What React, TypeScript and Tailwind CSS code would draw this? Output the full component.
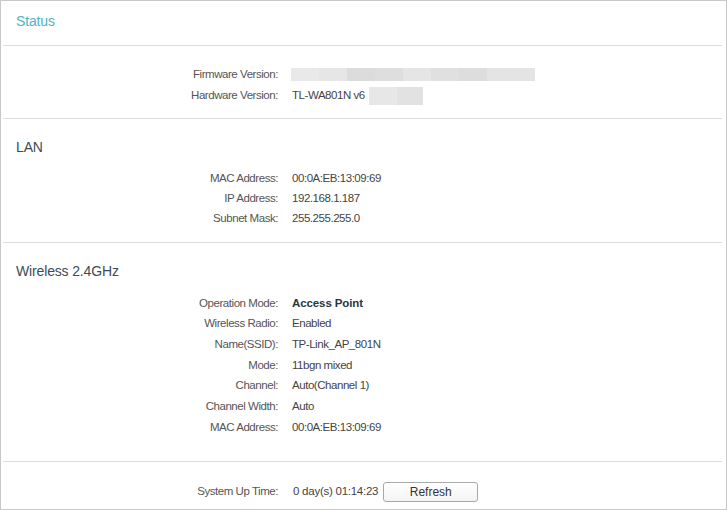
import React from 'react';

type Row = { label: string; value: React.ReactNode };

const font = { fontFamily: '"Liberation Sans", Arial, sans-serif' };

function Divider() {
  return <div className="ml-[2px] mr-[4px] h-px bg-[#dcdcdc]" />;
}

function InfoRow({ label, value, h }: { label: string; value: React.ReactNode; h: string }) {
  return (
    <div className={`flex items-center text-[11.5px] tracking-[-0.45px] ${h}`}>
      <div className="w-[277px] shrink-0 text-right text-[#555]">{label}</div>
      <div className="pl-[14px] text-[#444]">{value}</div>
    </div>
  );
}

const lanRows: Row[] = [
  { label: 'MAC Address:', value: '00:0A:EB:13:09:69' },
  { label: 'IP Address:', value: '192.168.1.187' },
  { label: 'Subnet Mask:', value: '255.255.255.0' },
];

const wirelessRows: Row[] = [
  {
    label: 'Operation Mode:',
    value: <span className="font-bold tracking-[-0.1px] text-[#26363f]">Access Point</span>,
  },
  { label: 'Wireless Radio:', value: 'Enabled' },
  { label: 'Name(SSID):', value: 'TP-Link_AP_801N' },
  { label: 'Mode:', value: '11bgn mixed' },
  { label: 'Channel:', value: 'Auto(Channel 1)' },
  { label: 'Channel Width:', value: 'Auto' },
  { label: 'MAC Address:', value: '00:0A:EB:13:09:69' },
];

const firmwareShades = ['#e9e9e9', '#e6e6e6', '#dcdcdc', '#dedede', '#e5e5e5', '#e0e0e0', '#dddddd', '#e4e4e4', '#e4e4e4'];

export default function App() {
  return (
    <div style={font} className="h-[510px] w-[727px] overflow-hidden border border-[#c8c8c8] bg-white">
      <div className="h-[44px] pl-[15px] pt-[11px] text-[14px] leading-[18px] tracking-[-0.15px] text-[#4fb3c6]">
        Status
      </div>
      <Divider />

      <div className="h-[72px] pt-[18px]">
        <InfoRow
          h="h-[21px]"
          label="Firmware Version:"
          value={
            <span className="flex h-[13px] -ml-[1px]">
              {firmwareShades.map((c, i) => (
                <span key={i} className="h-full" style={{ background: c, width: i === 8 ? 20 : 28 }} />
              ))}
            </span>
          }
        />
        <InfoRow
          h="h-[21px]"
          label="Hardware Version:"
          value={
            <span className="flex items-center">
              TL-WA801N v6
              <span className="ml-[4px] flex h-[18px]">
                <span className="h-full w-[28px] bg-[#e7e7e7]" />
                <span className="h-full w-[26px] bg-[#e2e2e2]" />
              </span>
            </span>
          }
        />
      </div>
      <Divider />

      <div className="h-[123px] pt-[19px]">
        <div className="pl-[15px] text-[14px] leading-[18px] tracking-[-0.15px] text-[#3d4b56]">LAN</div>
        <div className="mt-[13px]">
          {lanRows.map((r) => (
            <InfoRow key={r.label} h="h-[20px]" label={r.label} value={r.value} />
          ))}
        </div>
      </div>
      <Divider />

      <div className="h-[218px] pt-[19px]">
        <div className="pl-[15px] text-[14px] leading-[18px] tracking-[-0.15px] text-[#3d4b56]">
          Wireless 2.4GHz
        </div>
        <div className="mt-[13px]">
          {wirelessRows.map((r) => (
            <InfoRow key={r.label} h="h-[20.67px]" label={r.label} value={r.value} />
          ))}
        </div>
      </div>
      <Divider />

      <div className="pt-[20px]">
        <div className="flex h-[20px] items-center text-[11.5px]">
          <div className="w-[277px] shrink-0 text-right tracking-[-0.45px] text-[#555]">System Up Time:</div>
          <div className="pl-[15px] tracking-[-0.25px] text-[#444]">0 day(s) 01:14:23</div>
          <button className="ml-[5px] h-[20px] w-[95px] rounded-[3px] border border-[#a8a8a8] bg-gradient-to-b from-white to-[#f4f4f4] text-[12px] text-[#333]">
            Refresh
          </button>
        </div>
      </div>
    </div>
  );
}
